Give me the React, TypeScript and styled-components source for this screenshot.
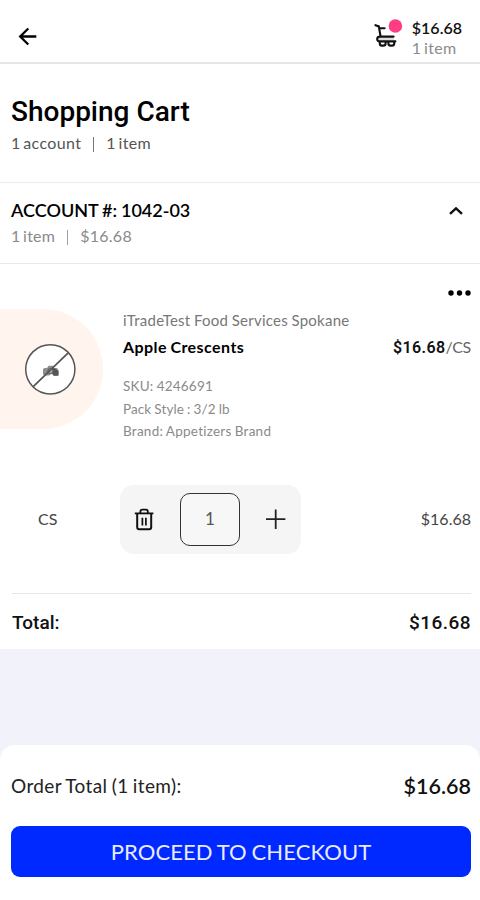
import React from "react";
import styled, { createGlobalStyle } from "styled-components";

const GlobalStyle = createGlobalStyle`
  *, *::before, *::after { box-sizing: border-box; }
  body { margin: 0; background: #f2f2fb; }
  h1 { margin: 0; }
  button { font: inherit; padding: 0; border: 0; background: none; display: block; }
  svg { display: block; }
`;

const lato = `Lato, "Open Sans", sans-serif`;
const roboto = `Roboto, "Liberation Sans", sans-serif`;

const Screen = styled.main`
  width: 480px;
  height: 900px;
  display: flex;
  flex-direction: column;
  overflow: hidden;
  background: #f2f2fb;
  font-family: ${lato};
  color: #111;
`;

interface TextProps {
  $size: number;
  $line: number;
  $color?: string;
  $weight?: number;
  $spacing?: number;
  $words?: number;
  $face?: string;
}

const Text = styled.div<TextProps>`
  font-family: ${(p) => p.$face ?? lato};
  font-size: ${(p) => p.$size}px;
  line-height: ${(p) => p.$line}px;
  font-weight: ${(p) => p.$weight ?? 400};
  letter-spacing: ${(p) => p.$spacing ?? 0}px;
  word-spacing: ${(p) => p.$words ?? 0}px;
  font-variant-ligatures: none;
  color: ${(p) => p.$color ?? "#111"};
  white-space: pre;
`;

const Header = styled.header`
  height: 64px;
  flex: none;
  display: flex;
  justify-content: space-between;
  padding: 18px 18px 0 18px;
  background: #fff;
  border-bottom: 2px solid #e6e6e6;
`;

const BackButton = styled.button`
  height: 37px;
`;

const CartSummary = styled.div`
  display: flex;
  gap: 9px;
`;

const Heading = styled.section`
  height: 119px;
  flex: none;
  padding: 31px 11px 0;
  background: #fff;
  border-bottom: 1px solid #ececec;
`;

const AccountBar = styled.section`
  height: 81px;
  flex: none;
  display: flex;
  justify-content: space-between;
  padding: 16px 17px 0 11px;
  background: #fff;
  border-bottom: 1px solid #e9e9e9;
`;

const Divider = styled.span`
  display: inline-block;
  width: 1px;
  height: 15px;
  margin: 0 12px;
  background: currentColor;
  opacity: 0.8;
  vertical-align: -3px;
`;

const Product = styled.section`
  height: 385px;
  flex: none;
  background: #fff;
`;

const MenuRow = styled.div`
  display: flex;
  justify-content: flex-end;
  align-items: flex-start;
  height: 45px;
  padding: 24px 9px 0 0;
`;

const Details = styled.div`
  height: 176px;
  display: grid;
  grid-template-columns: 123px 1fr auto;
  padding-right: 9px;
`;

const Thumb = styled.div`
  width: 103px;
  height: 120px;
  display: flex;
  align-items: center;
  padding-left: 24px;
  border-radius: 0 60px 60px 0;
  background: #fff4ee;
`;

const Name = styled.div`
  margin-bottom: 13px;
`;

const PriceCell = styled.div`
  display: flex;
  padding-top: 27px;
`;

const QuantityRow = styled.div`
  height: 69px;
  display: grid;
  grid-template-columns: 120px 181px 1fr;
  align-items: center;
  padding-right: 9px;
`;

const UnitCell = styled.div`
  padding: 0 0 2px 38px;
`;

const Stepper = styled.div`
  height: 69px;
  display: grid;
  grid-template-columns: 60px 60px 61px;
  align-items: center;
  border-radius: 14px;
  background: #f5f5f5;
`;

const StepButton = styled.button<{ $inset: number }>`
  height: 26px;
  padding-left: ${(p) => p.$inset}px;
`;

const Quantity = styled.div`
  height: 53px;
  display: flex;
  align-items: center;
  justify-content: center;
  margin-bottom: 1px;
  border: 1px solid #333;
  border-radius: 10px;
  background: #f7f7f7;
`;

const AmountCell = styled.div`
  justify-self: end;
  padding-bottom: 2px;
`;

const TotalRow = styled.div`
  display: flex;
  justify-content: space-between;
  margin: 39px 9px 0 12px;
  padding-top: 17px;
  border-top: 1px solid #e6e6e6;
`;

const Footer = styled.footer`
  height: 155px;
  flex: none;
  margin-top: auto;
  padding: 27px 9px 0 11px;
  border-radius: 15px 15px 0 0;
  background: #fff;
`;

const OrderRow = styled.div`
  display: flex;
  justify-content: space-between;
  margin-bottom: 26px;
`;

const CheckoutButton = styled.button`
  width: 100%;
  height: 51px;
  display: flex;
  align-items: center;
  justify-content: center;
  border-radius: 9px;
  background: #0029ff;
`;

const BackIcon = () => (
  <svg width="20" height="37" viewBox="0 0 20 37" fill="none" stroke="#000" strokeWidth="2.3">
    <path d="M18.3 18.5H2.5M10.3 10.5L2.2 18.5L10.3 26.5" />
  </svg>
);

const CartIcon = () => (
  <svg width="30" height="32" viewBox="0 0 30 32" fill="none">
    <path d="M6 20.9H21" stroke="#ddd" strokeWidth="2.8" />
    <path
      d="M2.4 7.2L5.8 8.4L7.4 17.5M6.8 10.2H11.6M20.6 18.6H6.8Q4.2 18.8 4.2 21Q4.2 23.4 6.8 23.4H22.4"
      stroke="#111"
      strokeWidth="2.1"
      strokeLinecap="round"
    />
    <path
      d="M6.8 23.8V25.4Q6.8 27.6 9 27.6H10.4Q12.6 27.6 12.6 25.4V23.8M15.4 23.8V25.4Q15.4 27.6 17.6 27.6H19Q21.2 27.6 21.2 25.4V23.8"
      stroke="#111"
      strokeWidth="2.1"
    />
    <circle cx="22.4" cy="8" r="6.8" fill="#ff3d84" />
  </svg>
);

const ChevronIcon = () => (
  <svg width="14" height="22" viewBox="0 0 14 22" fill="none" stroke="#111" strokeWidth="2.4">
    <path d="M1 14.8L7 9.3L13 14.8" />
  </svg>
);

const MoreIcon = () => (
  <svg width="24" height="10" viewBox="0 0 24 10" fill="#000">
    <circle cx="4" cy="5" r="2.7" />
    <circle cx="12.5" cy="5" r="2.7" />
    <circle cx="21" cy="5" r="2.7" />
  </svg>
);

const NoPhotoIcon = () => (
  <svg width="53" height="53" viewBox="0 0 53 53" fill="none">
    <circle cx="26.3" cy="26.3" r="24.6" fill="#fff" stroke="#555" strokeWidth="1.5" />
    <path
      d="M19 26.5Q19 25 21 25H23L24.5 22.8H29L30.2 25H32.5Q34.5 25.4 34.5 28V31.5Q34.5 33 33 33H29.5L27.8 30.5L25 32.5H21Q19 32.5 19 30.5Z"
      fill="#8d8d8d"
    />
    <path d="M29.5 24.5L34.5 28V32.5H30L27.5 29.5Z" fill="#555" />
    <circle cx="26.5" cy="28" r="2.6" fill="#aaa" stroke="#555" strokeWidth="1" />
    <path d="M9.2 43.7L44.2 9.8" stroke="#555" strokeWidth="1.7" />
  </svg>
);

const TrashIcon = () => (
  <svg width="20" height="26" viewBox="0 0 20 26" fill="none" stroke="#111">
    <path d="M0.8 6.4H19.4" strokeWidth="1.8" />
    <path d="M6.4 6V4.4Q6.4 2.6 8.2 2.6H12Q13.8 2.6 13.8 4.4V6" strokeWidth="1.8" />
    <path d="M3.2 6.5V20.2Q3.2 22.2 5.2 22.2H15.2Q17.2 22.2 17.2 20.2V6.5" strokeWidth="2" />
    <path d="M8.4 10.8V18.4M11.9 10.8V18.4" strokeWidth="1.7" />
  </svg>
);

const PlusIcon = () => (
  <svg width="22" height="26" viewBox="0 0 22 26" fill="none" stroke="#222" strokeWidth="1.8">
    <path d="M1 12.2H20.4M10.7 2.5V22" />
  </svg>
);

const specs = [
  { label: "SKU: 4246691", spacing: 0.22 },
  { label: "Pack Style : 3/2 lb", spacing: 0.1 },
  { label: "Brand: Appetizers Brand", spacing: 0.25 },
];

export default function App() {
  return (
    <>
      <GlobalStyle />
      <Screen>
        <Header>
          <BackButton aria-label="Back">
            <BackIcon />
          </BackButton>
          <CartSummary>
            <CartIcon />
            <div>
              <Text $size={16} $line={20} $weight={600}>$16.68</Text>
              <Text $size={16} $line={20} $words={-1.8} $spacing={0.35} $color="#8c8c8c">1 item</Text>
            </div>
          </CartSummary>
        </Header>

        <Heading>
          <Text as="h1" $size={28} $line={34} $weight={500} $face={roboto} $color="#000">
            Shopping Cart
          </Text>
          <Text $size={16} $line={28} $words={-1.8} $spacing={0.35} $color="#555">
            1 account<Divider />1 item
          </Text>
        </Heading>

        <AccountBar>
          <div>
            <Text $size={18} $line={22} $weight={600} $words={-0.6} $color="#000">
              ACCOUNT #: 1042-03
            </Text>
            <Text $size={16} $line={30} $words={-1.8} $spacing={0.25} $color="#8a8a8a">
              1 item<Divider />$16.68
            </Text>
          </div>
          <ChevronIcon />
        </AccountBar>

        <Product>
          <MenuRow>
            <button aria-label="More options">
              <MoreIcon />
            </button>
          </MenuRow>
          <Details>
            <Thumb>
              <NoPhotoIcon />
            </Thumb>
            <div>
              <Name>
                <Text $size={15} $line={23} $spacing={0.25} $words={-0.6} $color="#777">
                  iTradeTest Food Services Spokane
                </Text>
                <Text $size={16} $line={30} $weight={700} $spacing={0.45} $words={-1} $color="#000">
                  Apple Crescents
                </Text>
              </Name>
              {specs.map((spec) => (
                <Text key={spec.label} $size={13.5} $line={22.5} $spacing={spec.spacing} $words={-0.5} $color="#8a8a8a">
                  {spec.label}
                </Text>
              ))}
            </div>
            <PriceCell>
              <Text $size={16} $line={23} $weight={600} $spacing={0.35} $face={roboto}>$16.68</Text>
              <Text $size={16} $line={22} $color="#666" $spacing={-0.3}>/CS</Text>
            </PriceCell>
          </Details>
          <QuantityRow>
            <UnitCell>
              <Text $size={16} $line={22} $color="#444">CS</Text>
            </UnitCell>
            <Stepper>
              <StepButton $inset={14} aria-label="Remove item">
                <TrashIcon />
              </StepButton>
              <Quantity>
                <Text $size={17} $line={22} $color="#555">1</Text>
              </Quantity>
              <StepButton $inset={24.5} aria-label="Increase quantity">
                <PlusIcon />
              </StepButton>
            </Stepper>
            <AmountCell>
              <Text $size={16} $line={22} $color="#444">$16.68</Text>
            </AmountCell>
          </QuantityRow>
          <TotalRow>
            <Text $size={19} $line={24} $weight={500} $face={roboto}>Total:</Text>
            <Text $size={19} $line={24} $weight={500} $spacing={0.45} $face={roboto}>$16.68</Text>
          </TotalRow>
        </Product>

        <Footer>
          <OrderRow>
            <Text $size={19} $line={28} $spacing={0.38} $words={-1} $color="#222">Order Total (1 item):</Text>
            <Text $size={21.5} $line={28} $weight={600}>$16.68</Text>
          </OrderRow>
          <CheckoutButton>
            <Text $size={22} $line={28} $spacing={0.1} $words={-1} $color="#e9ebff">PROCEED TO CHECKOUT</Text>
          </CheckoutButton>
        </Footer>
      </Screen>
    </>
  );
}
